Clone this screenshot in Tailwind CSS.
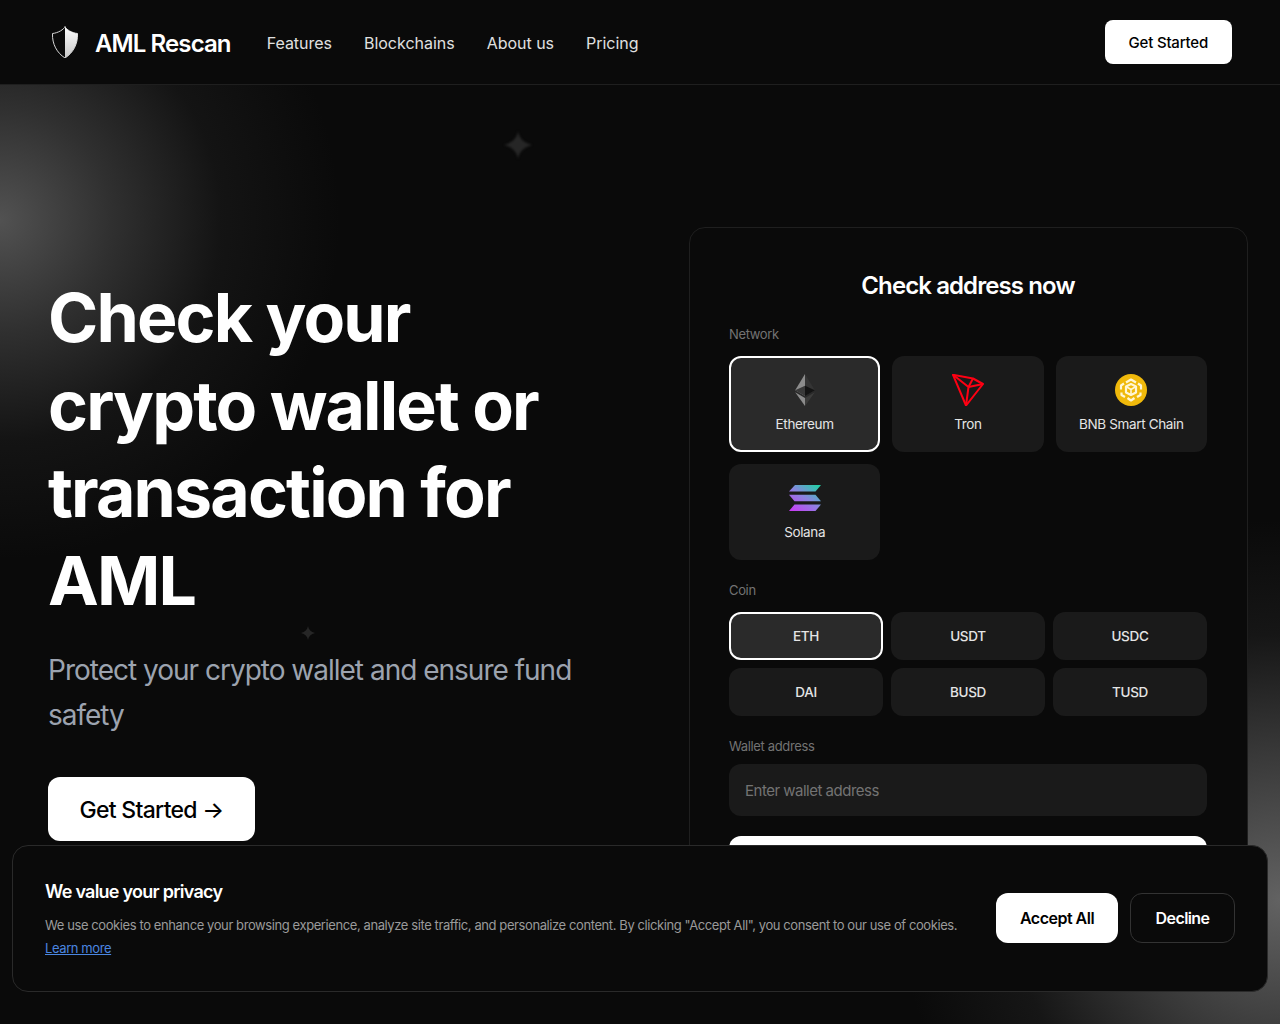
<!DOCTYPE html>
<html lang="en">
<head>
    <meta charset="UTF-8">
    <meta name="viewport" content="width=device-width, initial-scale=1.0">
    <title>AML Rescan</title>
    <script src="https://cdn.jsdelivr.net/npm/@tailwindcss/browser@4"></script>
</head>
<body class="bg-[#0a0a0a] text-white font-[Inter,sans-serif]">
<div class="relative h-[1024px] overflow-hidden">
    <!-- Background glows -->
    <div class="absolute left-[-340px] top-[-120px] w-[680px] h-[680px] bg-[radial-gradient(circle_closest-side,rgba(120,120,120,0.65)_0%,rgba(100,100,100,0.42)_33%,rgba(70,70,70,0.16)_65%,rgba(10,10,10,0)_100%)]"></div>
    <div class="absolute left-[900px] top-[520px] w-[760px] h-[760px] bg-[radial-gradient(circle_closest-side,rgba(120,120,120,0.8)_0%,rgba(100,100,100,0.5)_40%,rgba(70,70,70,0.2)_70%,rgba(10,10,10,0)_100%)]"></div>

    <!-- Sparkles -->
    <svg class="absolute left-[504px] top-[131px] blur-[1px]" width="28" height="28" viewBox="0 0 28 28"><path d="M14 0C15 7 20 12 28 14C20 16 15 21 14 28C13 21 8 16 0 14C8 12 13 7 14 0Z" fill="#262626"/></svg>
    <svg class="absolute left-[301px] top-[626px] blur-[0.5px]" width="14" height="14" viewBox="0 0 28 28"><path d="M14 0C15 7 20 12 28 14C20 16 15 21 14 28C13 21 8 16 0 14C8 12 13 7 14 0Z" fill="#262626"/></svg>

    <header class="relative h-[85px] bg-[#0a0a0a] border-b border-[#1f1f1f] flex items-center justify-between pl-12 pr-12">
        <div class="flex items-center">
            <a href="#" class="flex items-center gap-[15px]">
                <svg width="32" height="32" viewBox="0 0 32 32">
                    <defs>
                        <linearGradient id="shieldFill" x1="0" y1="0" x2="0" y2="1">
                            <stop offset="0" stop-color="#ffffff"/>
                            <stop offset="1" stop-color="#c8c8c8"/>
                        </linearGradient>
                    </defs>
                    <path d="M17 0.5C18 3.5 24 7 29.5 7.5C30 18 25 27 17 32C9 27 4 18 4.5 7.5C10 7 16 3.5 17 0.5Z" fill="#0a0a0a" stroke="#d8d8d8" stroke-width="1"/>
                    <path d="M17 0.5C18 3.5 24 7 29.5 7.5C30 18 25 27 17 32Z" fill="url(#shieldFill)"/>
                </svg>
                <span class="text-2xl leading-8 pt-1 font-semibold tracking-[-0.9px]">AML Rescan</span>
            </a>
            <nav class="flex items-center gap-8 ml-9 pt-[2px] text-base tracking-[-0.02px] text-[#e0e0e0]">
                <a href="#">Features</a>
                <a href="#">Blockchains</a>
                <a href="#">About us</a>
                <a href="#">Pricing</a>
            </nav>
        </div>
        <button class="h-11 px-6 pt-[2px] bg-white text-black text-[15px] tracking-[-0.2px] font-medium rounded-lg">Get Started</button>
    </header>

    <main class="relative flex items-start">
        <!-- Hero -->
        <section class="w-[689px] pl-12 pt-[189px] pr-[60px] shrink-0">
            <h1 class="max-w-[520px] text-[68px] leading-[87.5px] font-bold tracking-[-1.85px]">Check your crypto wallet or transaction for AML</h1>
            <p class="mt-6 text-[28px] leading-[45px] text-[#9ca3af] tracking-[-1px]">Protect your crypto wallet and ensure fund safety</p>
            <button class="mt-[39px] h-16 w-[207px] pt-[2px] bg-white text-black text-[23px] font-medium rounded-xl tracking-[-0.7px]">Get Started →</button>
        </section>

        <!-- Check form -->
        <section class="w-[559px] mt-[142px] bg-[#0a0a0a] border border-[#1f1f1f] rounded-2xl pl-[39px] pr-[40px] pt-[42px] pb-10">
            <h2 class="text-2xl leading-8 font-semibold text-center tracking-[-0.9px]">Check address now</h2>

            <label class="block mt-[22px] text-[13px] tracking-[-0.35px] leading-5 text-[#737373]">Network</label>
            <div class="grid grid-cols-3 gap-3 mt-3">
                <button class="h-24 rounded-xl bg-[#2a2a2a] border-2 border-white flex flex-col items-center justify-center gap-[4px] text-[13.5px] tracking-[-0.35px] text-[#e5e5e5]">
                    <svg width="20" height="32" viewBox="0 0 784.37 1277.39">
                        <polygon fill="#343434" points="392.07,0 383.5,29.11 383.5,873.74 392.07,882.29 784.13,650.54"/>
                        <polygon fill="#8C8C8C" points="392.07,0 0,650.54 392.07,882.29 392.07,472.33"/>
                        <polygon fill="#3C3C3B" points="392.07,956.52 387.24,962.41 387.24,1263.28 392.07,1277.38 784.37,724.89"/>
                        <polygon fill="#8C8C8C" points="392.07,1277.38 392.07,956.52 0,724.89"/>
                        <polygon fill="#141414" points="392.07,882.29 784.13,650.54 392.07,472.33"/>
                        <polygon fill="#393939" points="0,650.54 392.07,882.29 392.07,472.33"/>
                    </svg>
                    <span class="leading-5 mt-[4px]">Ethereum</span>
                </button>
                <button class="h-24 rounded-xl bg-[#1a1a1a] flex flex-col items-center justify-center gap-[4px] text-[13.5px] tracking-[-0.35px] text-[#e5e5e5]">
                    <svg width="32" height="32" viewBox="0 0 32 32" fill="none" stroke="#ff0013" stroke-width="2" stroke-linejoin="round">
                        <path d="M1 0.8L21 4.5L31 10L14 31.5Z"/>
                        <path d="M1 0.8L16.5 13L14 31.5"/>
                        <path d="M16.5 13L31 10"/>
                        <path d="M16.5 13L21 4.5"/>
                    </svg>
                    <span class="leading-5 mt-[4px]">Tron</span>
                </button>
                <button class="h-24 rounded-xl bg-[#1a1a1a] flex flex-col items-center justify-center gap-[4px] text-[13.5px] tracking-[-0.35px] text-[#e5e5e5]">
                    <svg width="32" height="32" viewBox="0 0 32 32" fill="none">
                        <circle cx="16" cy="16" r="16" fill="#f0b90b"/>
                        <g stroke="#fff6d6" stroke-width="2.2" stroke-linejoin="round">
                            <path d="M11 8.5L16 5.5L21 8.5"/>
                            <path d="M23 9.5L26 11.5V15.5"/>
                            <path d="M9 9.5L6 11.5V15.5"/>
                            <path d="M11 12.5L16 10L21 12.5V18.5L16 21L11 18.5Z"/>
                            <path d="M16 15.5V21M11 12.5L16 15.5L21 12.5" stroke-width="1.6"/>
                            <path d="M6.5 18.5V21L10 23"/>
                            <path d="M25.5 18.5V21L22 23"/>
                            <path d="M12.5 24L16 26.5L19.5 24"/>
                        </g>
                    </svg>
                    <span class="leading-5 mt-[4px]">BNB Smart Chain</span>
                </button>
                <button class="h-24 rounded-xl bg-[#1a1a1a] flex flex-col items-center justify-center gap-[4px] text-[13.5px] tracking-[-0.35px] text-[#e5e5e5]">
                    <svg width="32" height="32" viewBox="0 0 32 32">
                        <defs>
                            <linearGradient id="solanaFill" gradientUnits="userSpaceOnUse" x1="6" y1="32" x2="28" y2="0">
                                <stop offset="0" stop-color="#c93bf5"/>
                                <stop offset="0.5" stop-color="#8a84e0"/>
                                <stop offset="1" stop-color="#16d9a0"/>
                            </linearGradient>
                        </defs>
                        <path d="M6 3H32L26.5 9.5H0Z" fill="url(#solanaFill)"/>
                        <path d="M0 12.8H26.5L32 19.2H5.5Z" fill="url(#solanaFill)"/>
                        <path d="M5.5 22.5H32L26.5 29H0Z" fill="url(#solanaFill)"/>
                    </svg>
                    <span class="leading-5 mt-[4px]">Solana</span>
                </button>
            </div>

            <label class="block mt-5 text-[13px] tracking-[-0.35px] leading-5 text-[#737373]">Coin</label>
            <div class="grid grid-cols-3 gap-2 mt-3 text-[13.5px] tracking-[-0.3px] font-medium text-[#e5e5e5]">
                <button class="h-12 rounded-xl bg-[#2a2a2a] border-2 border-white">ETH</button>
                <button class="h-12 rounded-xl bg-[#1a1a1a]">USDT</button>
                <button class="h-12 rounded-xl bg-[#1a1a1a]">USDC</button>
                <button class="h-12 rounded-xl bg-[#1a1a1a]">DAI</button>
                <button class="h-12 rounded-xl bg-[#1a1a1a]">BUSD</button>
                <button class="h-12 rounded-xl bg-[#1a1a1a]">TUSD</button>
            </div>

            <label class="block mt-5 text-[13px] tracking-[-0.35px] leading-5 text-[#737373]">Wallet address</label>
            <input class="block w-full h-[52px] mt-2 px-4 rounded-xl bg-[#1a1a1a] text-[15px] tracking-[-0.5px] placeholder:text-[#737373] outline-none" placeholder="Enter wallet address">
            <button class="block w-full h-[52px] mt-5 rounded-xl bg-white text-black font-medium">Check</button>
        </section>
    </main>

    <!-- Cookie banner -->
    <div class="absolute left-3 right-3 bottom-8 h-[147px] bg-[#0a0a0a] border border-[#2a2a2a] rounded-2xl pl-8 pr-8 flex items-center justify-between">
        <div>
            <h3 class="text-lg leading-7 font-semibold tracking-[-0.75px]">We value your privacy</h3>
            <p class="mt-[8px] text-[13px] leading-[23px] text-[#9a9a9a] tracking-[-0.41px]">We use cookies to enhance your browsing experience, analyze site traffic, and personalize content. By clicking "Accept All", you consent to our use of cookies.<br><a href="#" class="text-[#4a86e0] underline">Learn more</a></p>
        </div>
        <div class="flex items-center gap-3 mb-[2px]">
            <button class="h-[50px] w-[122px] bg-white text-black text-base font-semibold rounded-xl tracking-[-0.5px]">Accept All</button>
            <button class="h-[50px] w-[105px] border border-[#333333] text-white text-base font-semibold rounded-xl tracking-[-0.6px]">Decline</button>
        </div>
    </div>
</div>
</body>
</html>
